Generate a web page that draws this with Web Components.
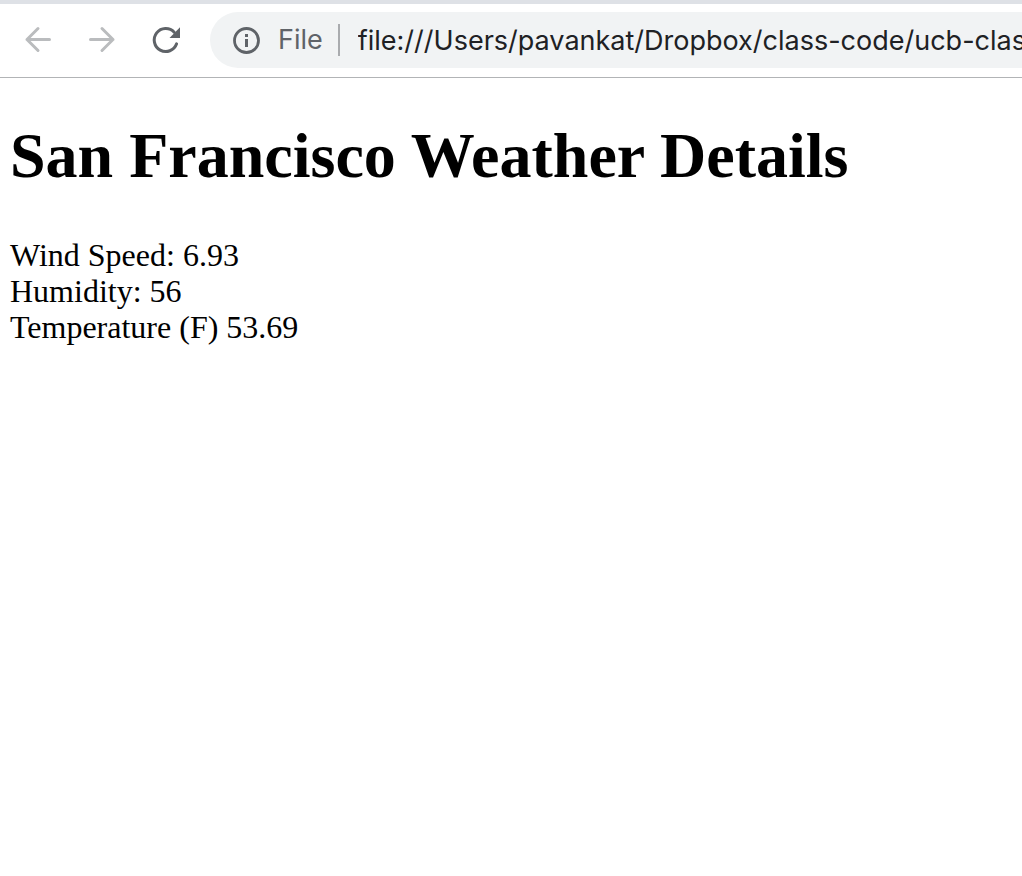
<!DOCTYPE html>
<html lang="en">
<head>
<meta charset="utf-8">
<title>San Francisco Weather Details</title>
<style>
  body { margin: 0; background: #fff; color: #000; overflow-x: hidden; }
</style>
</head>
<body>
<browser-toolbar>
  <nav-button label="Back" disabled>
    <svg width="32" height="32" viewBox="0 0 32 32" fill="none" stroke="#babcbe" stroke-width="3" stroke-linecap="round" stroke-linejoin="round"><path d="M27.500 15.500H5M16 4.500L5 15.500L16 26.500"/></svg>
  </nav-button>
  <nav-button label="Forward" disabled>
    <svg width="32" height="32" viewBox="0 0 32 32" fill="none" stroke="#babcbe" stroke-width="3" stroke-linecap="round" stroke-linejoin="round"><path d="M4.500 15.500H27M16 4.500L27 15.500L16 26.500"/></svg>
  </nav-button>
  <nav-button label="Reload">
    <svg width="32" height="32" viewBox="0 0 32 32" fill="none" stroke="#5f6368" stroke-width="3" stroke-linecap="round"><path d="M26.600 19.800A11.500 11.500 0 1 1 24.200 8.200"/><path d="M30 3.300V14H19.500Z" fill="#5f6368" stroke="none"/></svg>
  </nav-button>
  <address-bar scheme="File" url="file:///Users/pavankat/Dropbox/class-code/ucb-clas"></address-bar>
</browser-toolbar>
<weather-details>
  <span slot="title">San Francisco Weather Details</span>
  <weather-reading label="Wind Speed:">6.93</weather-reading>
  <weather-reading label="Humidity:">56</weather-reading>
  <weather-reading label="Temperature (F)">53.69</weather-reading>
</weather-details>
<script>
class ShadowElement extends HTMLElement {
  constructor() {
    super();
    this.attachShadow({ mode: 'open' }).innerHTML = this.constructor.markup;
  }
}

class BrowserToolbar extends ShadowElement {
  static markup = `
    <style>
      :host { display: block; border-top: 4px solid #dee1e6; border-bottom: 1px solid #b2b4b6; background: #fff; }
      nav { display: flex; align-items: center; padding: 8px 0 9px 6px; }
    </style>
    <nav aria-label="Browser"><slot></slot></nav>`;
}

class NavButton extends ShadowElement {
  static markup = `
    <style>
      :host { display: block; flex: none; }
      button { display: flex; align-items: center; justify-content: center; width: 64px; height: 56px; margin: 0; padding: 0; border: 0; background: none; }
    </style>
    <button type="button"><slot></slot></button>`;
  connectedCallback() {
    const button = this.shadowRoot.querySelector('button');
    button.setAttribute('aria-label', this.getAttribute('label'));
    button.disabled = this.hasAttribute('disabled');
  }
}

class AddressBar extends ShadowElement {
  static markup = `
    <style>
      :host { display: flex; flex: 1; min-width: 0; align-items: center; box-sizing: border-box; height: 56px; margin-left: 12px; padding-left: 20px; border-radius: 28px 0 0 28px; background: #f1f3f4; font: 27px/34px Inter, Roboto, sans-serif; overflow: hidden; }
      svg { flex: none; }
      label { margin-left: 16px; color: #5f6368; }
      i { flex: none; width: 2px; height: 32px; margin: 0 18px 0 15px; background: #a9abae; }
      input { flex: 1; min-width: 0; height: 40px; margin: 0; padding: 0; border: 0; outline: 0; background: none; color: #202124; font: inherit; }
    </style>
    <svg width="32" height="32" viewBox="0 0 32 32" aria-hidden="true"><circle cx="16.500" cy="16.500" r="12" fill="none" stroke="#5f6368" stroke-width="2.800"/><path d="M15 10h3v3h-3zM15 15h3v8h-3z" fill="#5f6368"/></svg>
    <label for="url"></label><i></i><input id="url" type="text" spellcheck="false">`;
  connectedCallback() {
    this.shadowRoot.querySelector('label').textContent = this.getAttribute('scheme');
    this.shadowRoot.querySelector('input').value = this.getAttribute('url');
  }
}

class WeatherDetails extends ShadowElement {
  static markup = `
    <style>
      :host { display: block; padding: 41px 10px; font: 32px/36px "Liberation Serif", "Times New Roman", serif; }
      h1 { margin: 0 0 44px; font-size: 64px; line-height: 74px; }
    </style>
    <h1><slot name="title"></slot></h1>
    <slot></slot>`;
}

class WeatherReading extends ShadowElement {
  static markup = `
    <style>:host { display: block; }</style>
    <span></span> <slot></slot>`;
  connectedCallback() {
    this.shadowRoot.querySelector('span').textContent = this.getAttribute('label');
  }
}

customElements.define('browser-toolbar', BrowserToolbar);
customElements.define('nav-button', NavButton);
customElements.define('address-bar', AddressBar);
customElements.define('weather-details', WeatherDetails);
customElements.define('weather-reading', WeatherReading);
</script>
</body>
</html>
